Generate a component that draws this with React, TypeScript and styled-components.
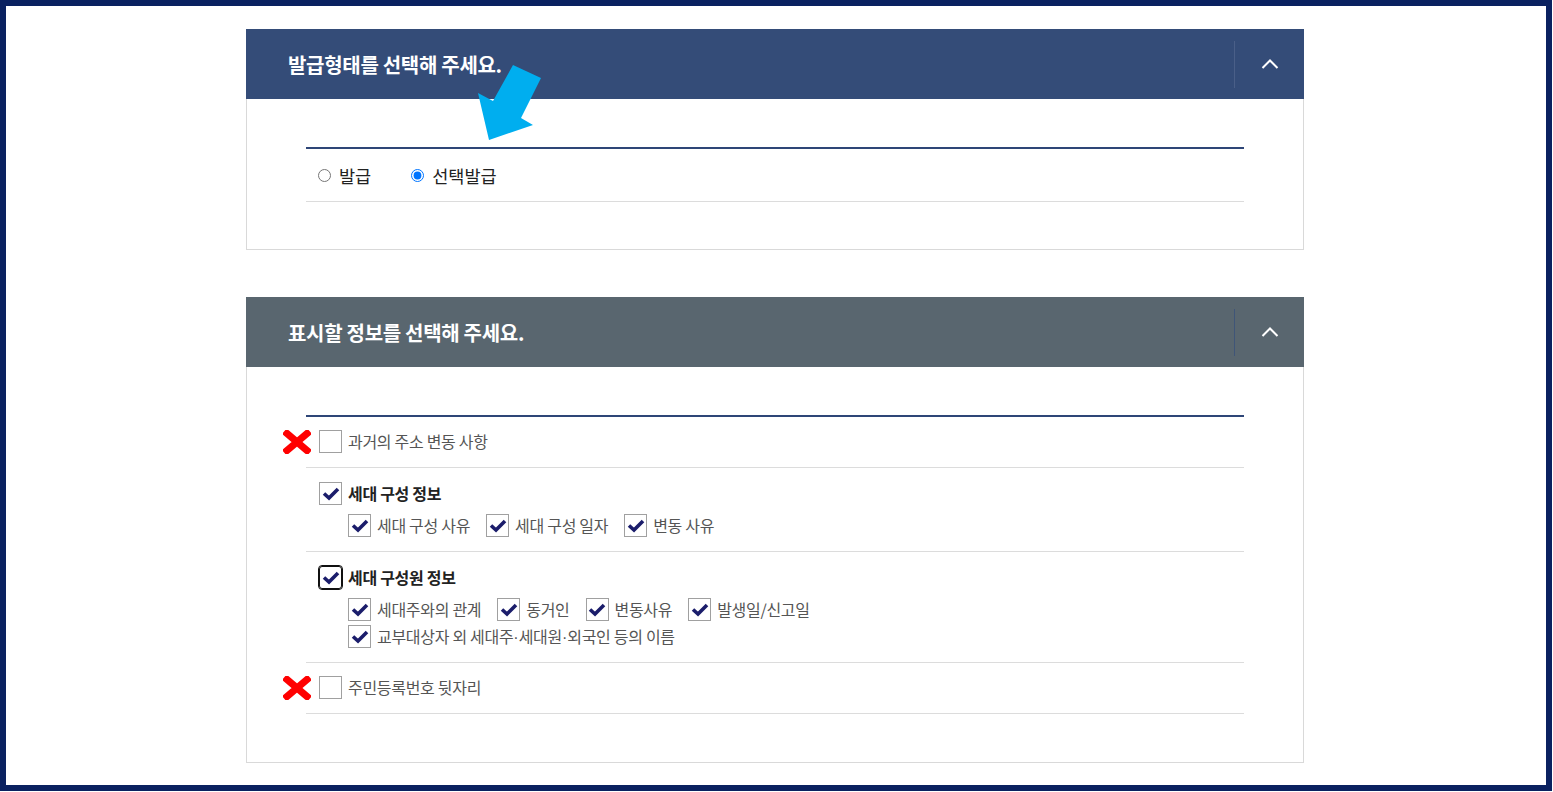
import React from 'react';
import styled, { createGlobalStyle } from 'styled-components';

const GlobalStyle = createGlobalStyle`
  html, body {
    margin: 0;
    padding: 0;
    background: #ffffff;
    font-family: "Noto Sans CJK KR", "Noto Sans", sans-serif;
  }
`;

const Frame = styled.div`
  position: relative;
  box-sizing: border-box;
  width: 1552px;
  height: 791px;
  border: 6px solid #0a2160;
  padding: 23px 0 0 240px;
  background: #ffffff;
`;

const Panel = styled.section`
  width: 1058px;
  margin-bottom: 47px;
`;

const PanelHeader = styled.div<{ $bg: string }>`
  display: flex;
  align-items: center;
  height: 70px;
  background-color: ${(p) => p.$bg};
`;

const PanelTitle = styled.h2`
  flex: 1;
  margin: 0;
  padding-left: 42px;
  font-size: 20px;
  font-weight: 700;
  letter-spacing: -0.3px;
  color: #ffffff;
`;

const ToggleButton = styled.button<{ $line: string }>`
  display: flex;
  align-items: center;
  justify-content: center;
  width: 70px;
  height: 47px;
  padding: 0;
  background: transparent;
  border: none;
  border-left: 1px solid ${(p) => p.$line};
`;

const PanelBody = styled.div<{ $bottom?: number }>`
  box-sizing: border-box;
  padding: 48px 59px ${(p) => p.$bottom ?? 48}px;
  border: 1px solid #d9d9d9;
  border-top: none;
`;

const List = styled.div`
  border-top: 2px solid #2e4677;
`;

const RadioRow = styled.div`
  display: flex;
  align-items: center;
  height: 52px;
  padding-left: 12px;
  border-bottom: 1px solid #dcdcdc;
`;

const RadioLabel = styled.label`
  display: flex;
  align-items: center;
  gap: 8px;
  margin-right: 40px;
  font-size: 17.5px;
  color: #222;

  input {
    margin: 0;
    width: 13px;
    height: 13px;
  }
`;

const OptionRow = styled.div`
  position: relative;
  display: flex;
  flex-direction: column;
  align-items: flex-start;
  padding: 13px 0 14px 13px;
  border-bottom: 1px solid #dcdcdc;

  &.group {
    padding: 14px 0 14px 13px;
  }
`;

const CrossMark = styled.span`
  position: absolute;
  left: -23px;
  top: 50%;
  margin-top: -12px;
  width: 28px;
  height: 24px;
  display: flex;
`;

const Option = styled.label<{ $bold?: boolean }>`
  display: inline-flex;
  align-items: center;
  gap: 6px;
  height: 23px;
  line-height: 23px;
  font-size: 16px;
  font-weight: ${(p) => (p.$bold ? 700 : 400)};
  color: ${(p) => (p.$bold ? '#222' : '#555')};
  letter-spacing: -0.3px;
  white-space: nowrap;
`;

const Dot = styled.span`
  font-family: "Liberation Sans", sans-serif;
  letter-spacing: 0;
`;

const Box = styled.span<{ $focused?: boolean }>`
  box-sizing: border-box;
  display: flex;
  align-items: center;
  justify-content: center;
  flex: none;
  width: 23px;
  height: 23px;
  background: #ffffff;
  border: 1.5px solid ${(p) => (p.$focused ? '#111' : '#a0a0a0')};
  border-radius: ${(p) => (p.$focused ? '3px' : '0')};
  outline: ${(p) => (p.$focused ? '1.5px solid #111' : 'none')};
`;

const SubList = styled.div`
  display: flex;
  flex-direction: column;
  gap: 4px;
  margin-top: 9px;
  padding-left: 29px;
`;

const SubLine = styled.div`
  display: flex;
  align-items: center;
  gap: 16px;
`;

const ArrowMark = styled.svg`
  position: absolute;
  left: 472px;
  top: 57px;
`;

const Chevron = () => (
  <svg width="18" height="10" viewBox="0 0 18 10">
    <polyline points="1.5,9 9,1.5 16.5,9" fill="none" stroke="#ffffff" strokeWidth="2" />
  </svg>
);

const RedCross = () => (
  <CrossMark>
    <svg width="28" height="24" viewBox="0 0 28 24">
      <path d="M4 3.5 L24 20.5 M24 3.5 L4 20.5" stroke="#ff0000" strokeWidth="7" strokeLinecap="square" />
    </svg>
  </CrossMark>
);

const CheckBox: React.FC<{ checked?: boolean; focused?: boolean }> = ({ checked, focused }) => (
  <Box $focused={focused}>
    {checked && (
      <svg width="18" height="15" viewBox="0 0 18 15">
        <polyline points="2,7.5 7,12 16,3" fill="none" stroke="#1b1d6b" strokeWidth="3.6" />
      </svg>
    )}
  </Box>
);

const Item: React.FC<{
  label: React.ReactNode;
  checked?: boolean;
  bold?: boolean;
  focused?: boolean;
}> = ({ label, checked, bold, focused }) => (
  <Option $bold={bold}>
    <CheckBox checked={checked} focused={focused} />
    <span>{label}</span>
  </Option>
);

const Header: React.FC<{ title: string; bg: string; line: string }> = ({ title, bg, line }) => (
  <PanelHeader $bg={bg}>
    <PanelTitle>{title}</PanelTitle>
    <ToggleButton $line={line}>
      <Chevron />
    </ToggleButton>
  </PanelHeader>
);

const App: React.FC = () => {
  return (
    <>
      <GlobalStyle />
      <Frame>
        <Panel>
          <Header title="발급형태를 선택해 주세요." bg="#344c78" line="#4a5f88" />
          <PanelBody $bottom={47}>
            <List>
              <RadioRow>
                <RadioLabel>
                  <input type="radio" name="issue" readOnly />
                  발급
                </RadioLabel>
                <RadioLabel>
                  <input type="radio" name="issue" defaultChecked />
                  선택발급
                </RadioLabel>
              </RadioRow>
            </List>
          </PanelBody>
        </Panel>

        <Panel>
          <Header title="표시할 정보를 선택해 주세요." bg="#59666f" line="#3f5578" />
          <PanelBody>
            <List>
              <OptionRow>
                <RedCross />
                <Item label="과거의 주소 변동 사항" />
              </OptionRow>
              <OptionRow className="group">
                <Item label="세대 구성 정보" checked bold />
                <SubList>
                  <SubLine>
                    <Item label="세대 구성 사유" checked />
                    <Item label="세대 구성 일자" checked />
                    <Item label="변동 사유" checked />
                  </SubLine>
                </SubList>
              </OptionRow>
              <OptionRow className="group">
                <Item label="세대 구성원 정보" checked bold focused />
                <SubList>
                  <SubLine>
                    <Item label="세대주와의 관계" checked />
                    <Item label="동거인" checked />
                    <Item label="변동사유" checked />
                    <Item label="발생일/신고일" checked />
                  </SubLine>
                  <SubLine>
                    <Item
                      checked
                      label={
                        <>
                          교부대상자 외 세대주<Dot>·</Dot>세대원<Dot>·</Dot>외국인 등의 이름
                        </>
                      }
                    />
                  </SubLine>
                </SubList>
              </OptionRow>
              <OptionRow>
                <RedCross />
                <Item label="주민등록번호 뒷자리" />
              </OptionRow>
            </List>
          </PanelBody>
        </Panel>

        <ArrowMark width="64" height="80" viewBox="0 0 64 80">
          <polygon points="11,77 0,30 15,38 35,2 63,15 43,55 55,62" fill="#00aeef" />
        </ArrowMark>
      </Frame>
    </>
  );
};

export default App;
